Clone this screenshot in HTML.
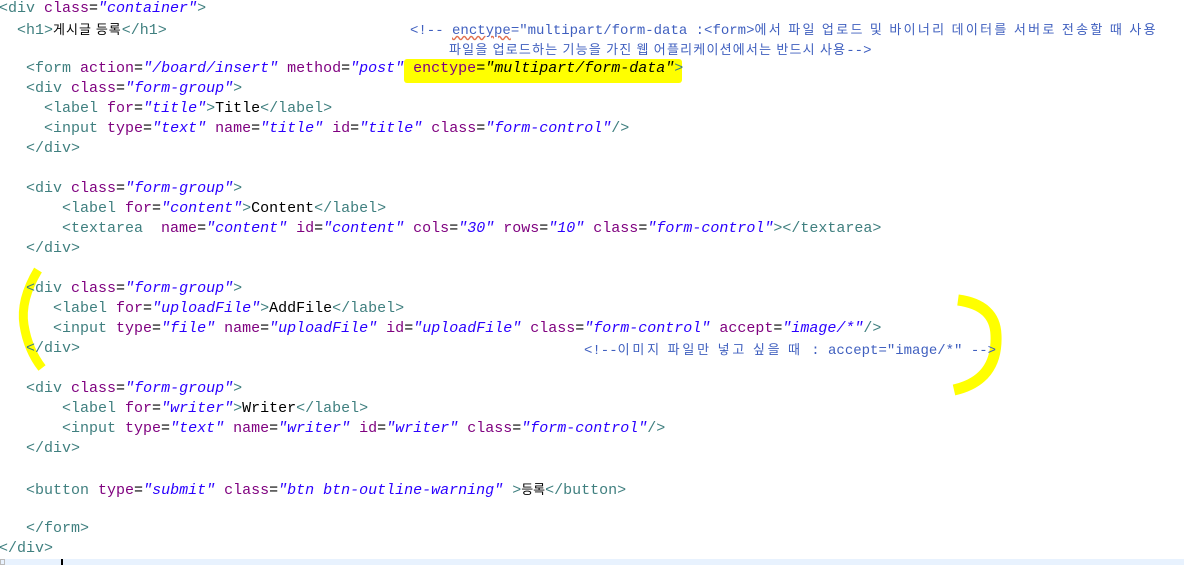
<!DOCTYPE html>
<html><head><meta charset="utf-8"><style>
body{margin:0;width:1184px;height:565px;background:#fff;position:relative;overflow:hidden;font-family:"Liberation Mono","Noto Sans CJK KR",monospace;font-size:15px;}
.l{position:absolute;left:-1px;height:20px;line-height:20px;white-space:pre;color:#000;}
.t{color:#3f7f7f}.a{color:#7f007f}.v{color:#2a00ff;font-style:italic}.c{color:#3f5fbf}
.k{font-family:"Noto Sans CJK KR",sans-serif;font-size:13px}
.hl{position:absolute;background:#ffff00;}
</style></head><body>
<div class="hl" style="left:404px;top:59px;width:278px;height:24px;border-radius:3px"></div>
<svg style="position:absolute;left:0;top:0" width="1184" height="565">
<path d="M38 270 Q20 300 24 325 Q28 350 42 368" stroke="#ffff00" stroke-width="9" fill="none"/>
<path d="M958 300 Q995 305 996 335 Q998 380 954 390" stroke="#ffff00" stroke-width="11" fill="none"/>
</svg>
<div style="position:absolute;left:0;top:559px;width:1184px;height:6px;background:#e8f2fe"></div>
<div style="position:absolute;left:61px;top:559px;width:2px;height:6px;background:#000"></div>
<div style="position:absolute;left:0;top:559px;width:5px;height:6px;border:1px solid #bbb;box-sizing:border-box"></div>

<div class="l" style="top:-1px"><span class="t">&lt;div </span><span class="a">class</span>=<span class="v">"container"</span><span class="t">&gt;</span></div>
<div class="l" style="top:19px">  <span class="t">&lt;h1&gt;</span><span class="k" style="letter-spacing:1px">게시글 등록</span><span class="t">&lt;/h1&gt;</span></div>
<div class="l c" style="top:19px;left:410px;font-size:14px">&lt;!-- <span style="text-decoration:underline wavy #e07050">enctype</span>="multipart/form-data :&lt;form&gt;<span class="k" style="letter-spacing:2.3px">에서 파일 업로드 및 바이너리 데이터를 서버로 전송할 때 사용</span></div>
<div class="l c" style="top:39px;left:449px;font-size:14px"><span class="k" style="letter-spacing:1.2px">파일을 업로드하는 기능을 가진 웹 어플리케이션에서는 반드시 사용</span>--&gt;</div>
<div class="l" style="top:59px">   <span class="t">&lt;form </span><span class="a">action</span>=<span class="v">"/board/insert"</span> <span class="a">method</span>=<span class="v">"post"</span> <span class="a">enctype</span>=<span class="v" style="color:#000">"multipart/form-data"</span><span class="t">&gt;</span></div>
<div class="l" style="top:79px">   <span class="t">&lt;div </span><span class="a">class</span>=<span class="v">"form-group"</span><span class="t">&gt;</span></div>
<div class="l" style="top:99px">     <span class="t">&lt;label </span><span class="a">for</span>=<span class="v">"title"</span><span class="t">&gt;</span>Title<span class="t">&lt;/label&gt;</span></div>
<div class="l" style="top:119px">     <span class="t">&lt;input </span><span class="a">type</span>=<span class="v">"text"</span> <span class="a">name</span>=<span class="v">"title"</span> <span class="a">id</span>=<span class="v">"title"</span> <span class="a">class</span>=<span class="v">"form-control"</span><span class="t">/&gt;</span></div>
<div class="l" style="top:139px">   <span class="t">&lt;/div&gt;</span></div>
<div class="l" style="top:179px">   <span class="t">&lt;div </span><span class="a">class</span>=<span class="v">"form-group"</span><span class="t">&gt;</span></div>
<div class="l" style="top:199px">       <span class="t">&lt;label </span><span class="a">for</span>=<span class="v">"content"</span><span class="t">&gt;</span>Content<span class="t">&lt;/label&gt;</span></div>
<div class="l" style="top:219px">       <span class="t">&lt;textarea  </span><span class="a">name</span>=<span class="v">"content"</span> <span class="a">id</span>=<span class="v">"content"</span> <span class="a">cols</span>=<span class="v">"30"</span> <span class="a">rows</span>=<span class="v">"10"</span> <span class="a">class</span>=<span class="v">"form-control"</span><span class="t">&gt;&lt;/textarea&gt;</span></div>
<div class="l" style="top:239px">   <span class="t">&lt;/div&gt;</span></div>
<div class="l" style="top:279px">   <span class="t">&lt;div </span><span class="a">class</span>=<span class="v">"form-group"</span><span class="t">&gt;</span></div>
<div class="l" style="top:299px">      <span class="t">&lt;label </span><span class="a">for</span>=<span class="v">"uploadFile"</span><span class="t">&gt;</span>AddFile<span class="t">&lt;/label&gt;</span></div>
<div class="l" style="top:319px">      <span class="t">&lt;input </span><span class="a">type</span>=<span class="v">"file"</span> <span class="a">name</span>=<span class="v">"uploadFile"</span> <span class="a">id</span>=<span class="v">"uploadFile"</span> <span class="a">class</span>=<span class="v">"form-control"</span> <span class="a">accept</span>=<span class="v">"image/*"</span><span class="t">/&gt;</span></div>
<div class="l" style="top:339px">   <span class="t">&lt;/div&gt;</span></div>
<div class="l c" style="top:339px;left:584px;font-size:14px">&lt;!--<span class="k" style="letter-spacing:2.8px">이미지 파일만 넣고 싶을 때</span> : accept="image/*" --&gt;</div>
<div class="l" style="top:379px">   <span class="t">&lt;div </span><span class="a">class</span>=<span class="v">"form-group"</span><span class="t">&gt;</span></div>
<div class="l" style="top:399px">       <span class="t">&lt;label </span><span class="a">for</span>=<span class="v">"writer"</span><span class="t">&gt;</span>Writer<span class="t">&lt;/label&gt;</span></div>
<div class="l" style="top:419px">       <span class="t">&lt;input </span><span class="a">type</span>=<span class="v">"text"</span> <span class="a">name</span>=<span class="v">"writer"</span> <span class="a">id</span>=<span class="v">"writer"</span> <span class="a">class</span>=<span class="v">"form-control"</span><span class="t">/&gt;</span></div>
<div class="l" style="top:439px">   <span class="t">&lt;/div&gt;</span></div>
<div class="l" style="top:479px">   <span class="t">&lt;button </span><span class="a">type</span>=<span class="v">"submit"</span> <span class="a">class</span>=<span class="v">"btn btn-outline-warning"</span> <span class="t">&gt;</span><span class="k">등록</span><span class="t">&lt;/button&gt;</span></div>
<div class="l" style="top:519px">   <span class="t">&lt;/form&gt;</span></div>
<div class="l" style="top:539px"><span class="t">&lt;/div&gt;</span></div>
</body></html>
